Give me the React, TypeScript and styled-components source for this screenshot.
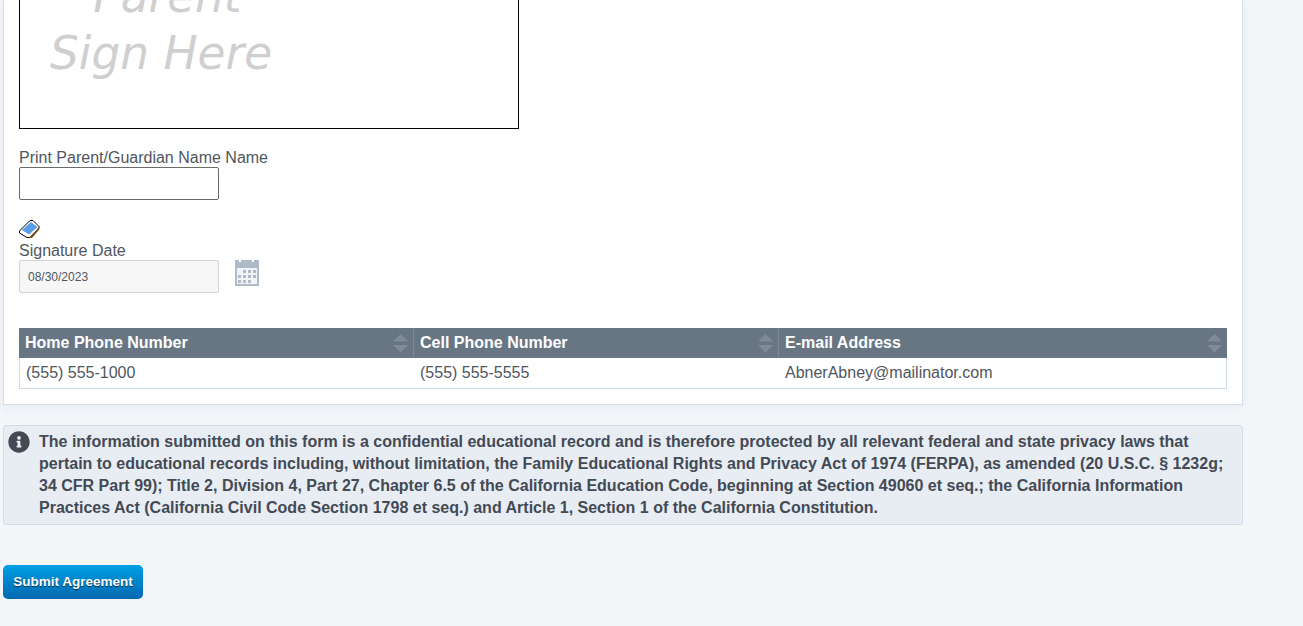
import React from 'react'
import styled, { createGlobalStyle } from 'styled-components'
import { FaInfoCircle } from 'react-icons/fa'

const GlobalStyle = createGlobalStyle`
    html, body {
        margin: 0;
        padding: 0;
        background: #f3f6f9;
        font-family: "Liberation Sans", Arial, sans-serif;
        overflow: hidden;
    }
`

const Page = styled.div`
    width: 1240px;
    margin-left: 3px;
    height: 626px;
`

const Card = styled.section`
    box-sizing: border-box;
    height: 405px;
    padding: 0 15px;
    background: #fff;
    border: 1px solid #d3dee8;
    border-top: 0;
    box-shadow: 0 2px 8px rgba(190, 205, 220, 0.25);
    display: flex;
    flex-direction: column;
    align-items: flex-start;
`

const SignBox = styled.div`
    box-sizing: border-box;
    width: 500px;
    height: 129px;
    flex: none;
    overflow: hidden;
    border: 1px solid #000;
    border-top: 0;
    color: #cfcfcf;
    font-family: "DejaVu Sans", sans-serif;
    font-style: italic;
    font-size: 45.4px;
    line-height: 57px;
    white-space: pre;
    padding-left: 30px;
    margin-bottom: 20px;
`

const SignText = styled.div`
    margin-top: -32px;
`

const FieldLabel = styled.label`
    display: block;
    font-size: 16px;
    line-height: 18px;
    color: #50565e;
`

const NameInput = styled.input`
    box-sizing: border-box;
    display: block;
    width: 200px;
    height: 33px;
    background: #fff;
    border: 1px solid #6b6b6b;
    border-radius: 2px;
    margin: 0 0 20px;
`

const Eraser = styled.svg`
    display: block;
    width: 21px;
    height: 18px;
    margin-bottom: 4px;
`

const DateRow = styled.div`
    display: flex;
    align-items: flex-start;
    gap: 16px;
    margin-bottom: 35px;
`

const DateInput = styled.input`
    box-sizing: border-box;
    width: 200px;
    height: 33px;
    padding: 0 8px;
    background: #f7f7f7;
    border: 1px solid #d2d2d2;
    border-radius: 2px;
    font-family: "Liberation Sans", Arial, sans-serif;
    font-size: 12px;
    color: #50565e;
`

const CalendarIcon = styled.svg`
    display: block;
    width: 24px;
    height: 26px;
`

const Table = styled.table`
    width: 1208px;
    table-layout: fixed;
    border-collapse: separate;
    border-spacing: 0;
`

const HeadCell = styled.th<{ $width?: number }>`
    position: relative;
    box-sizing: border-box;
    height: 30px;
    padding: 0 0 0 6px;
    width: ${(p) => (p.$width ? `${p.$width}px` : 'auto')};
    background: #687684;
    border-right: 1px solid #7d8996;
    color: #fff;
    font-size: 16px;
    font-weight: bold;
    text-align: left;
    &:last-child {
        border-right: 0;
    }
`

const SortArrows = styled.svg`
    position: absolute;
    right: 5px;
    top: 6px;
    width: 15px;
    height: 19px;
`

const BodyCell = styled.td`
    box-sizing: border-box;
    height: 31px;
    padding: 0 0 0 6px;
    font-size: 16px;
    color: #50565e;
    border-bottom: 1px solid #cddbe6;
    &:first-child {
        border-left: 1px solid #cddbe6;
    }
    &:last-child {
        border-right: 1px solid #cddbe6;
    }
`

const Notice = styled.div`
    box-sizing: border-box;
    height: 100px;
    margin-top: 20px;
    padding: 5px 15px 0 35px;
    position: relative;
    background: #e8edf4;
    border: 1px solid #d3dde8;
    border-radius: 3px;
    color: #434a54;
    font-size: 16px;
    font-weight: bold;
    line-height: 22px;
`

const NoticeIcon = styled(FaInfoCircle)`
    position: absolute;
    left: 4px;
    top: 5px;
    width: 22px;
    height: 22px;
    color: #434a54;
`

const SubmitButton = styled.button`
    display: block;
    width: 140px;
    height: 34px;
    margin-top: 40px;
    padding: 0 0 2px;
    border: 0;
    border-radius: 5px;
    background: linear-gradient(to bottom, #00a0e3, #0068b1);
    color: #fff;
    font-family: "Liberation Sans", Arial, sans-serif;
    font-size: 13.5px;
    font-weight: bold;
    text-shadow: 0 1px 1px rgba(0, 0, 0, 0.6);
`

const Sort = () => (
    <SortArrows viewBox="0 0 15 19">
        <path d="M7.5 0 L15 7.5 H0 Z M0 11 H15 L7.5 18.5 Z" fill="#7f8b98" />
    </SortArrows>
)

const App: React.FC = () => {
    return (
        <Page>
            <GlobalStyle />
            <Card>
                <SignBox>
                    <SignText>{'   Parent\nSign Here'}</SignText>
                </SignBox>
                <FieldLabel>Print Parent/Guardian Name Name</FieldLabel>
                <NameInput type="text" />
                <Eraser viewBox="0 0 21 18">
                    <path d="M0.5 11 L11 0.5 H14 L20.5 7 L12 17.5 H8 L0.5 13 Z" fill="#fff" stroke="#000" strokeWidth="1" />
                    <path d="M3 10 L12 2 L18.5 7 L10 14.5 Z" fill="#5a9de8" />
                    <path d="M19.5 8 L21 8.5 L13 18 H10 L11.5 16 Z" fill="#7a4a12" />
                </Eraser>
                <FieldLabel>Signature Date</FieldLabel>
                <DateRow>
                    <DateInput type="text" defaultValue="08/30/2023" readOnly />
                    <CalendarIcon viewBox="0 0 24 26">
                        <path d="M0 0 H4 V2 H6 V0 H17 V2 H19 V0 H24 V26 H0 Z" fill="#aebac7" />
                        <rect x="2" y="8" width="20" height="16" fill="#f2f4f7" />
                        <path d="M8 10h3v3H8z M13 10h3v3h-3z M18 10h3v3h-3z M3 15h3v3H3z M8 15h3v3H8z M13 15h3v3h-3z M18 15h3v3h-3z M3 20h3v3H3z M8 20h3v3H8z M13 20h3v3h-3z" fill="#aebac7" />
                    </CalendarIcon>
                </DateRow>
                <Table>
                    <thead>
                        <tr>
                            <HeadCell $width={395}>Home Phone Number<Sort /></HeadCell>
                            <HeadCell $width={365}>Cell Phone Number<Sort /></HeadCell>
                            <HeadCell>E-mail Address<Sort /></HeadCell>
                        </tr>
                    </thead>
                    <tbody>
                        <tr>
                            <BodyCell>(555) 555-1000</BodyCell>
                            <BodyCell>(555) 555-5555</BodyCell>
                            <BodyCell>AbnerAbney@mailinator.com</BodyCell>
                        </tr>
                    </tbody>
                </Table>
            </Card>
            <Notice>
                <NoticeIcon />
                The information submitted on this form is a confidential educational record and is therefore protected by all relevant federal and state privacy laws that pertain to educational records including, without limitation, the Family Educational Rights and Privacy Act of 1974 (FERPA), as amended (20 U.S.C. § 1232g; 34 CFR Part 99); Title 2, Division 4, Part 27, Chapter 6.5 of the California Education Code, beginning at Section 49060 et seq.; the California Information Practices Act (California Civil Code Section 1798 et seq.) and Article 1, Section 1 of the California Constitution.
            </Notice>
            <SubmitButton>Submit Agreement</SubmitButton>
        </Page>
    )
}

export default App
